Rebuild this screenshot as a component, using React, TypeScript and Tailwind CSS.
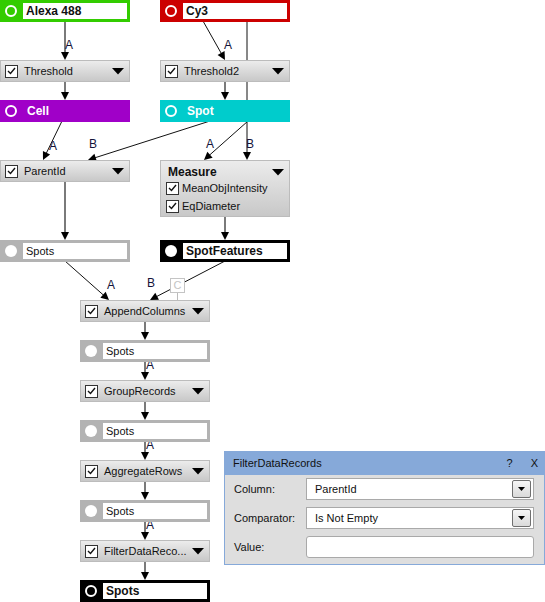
import React from 'react'

type Edge = { x1: number; y1: number; x2: number; y2: number; thick?: boolean }

const edges: Edge[] = [
  { x1: 65, y1: 21, x2: 65, y2: 60, thick: true },
  { x1: 203, y1: 21, x2: 225, y2: 60 },
  { x1: 247, y1: 21, x2: 247, y2: 160 },
  { x1: 65, y1: 82, x2: 65, y2: 100, thick: true },
  { x1: 225, y1: 82, x2: 225, y2: 100, thick: true },
  { x1: 62, y1: 121, x2: 43, y2: 160 },
  { x1: 210, y1: 121, x2: 88, y2: 160 },
  { x1: 248, y1: 121, x2: 204, y2: 160 },
  { x1: 65, y1: 182, x2: 65, y2: 240, thick: true },
  { x1: 225, y1: 217, x2: 225, y2: 240, thick: true },
  { x1: 65, y1: 261, x2: 109, y2: 300 },
  { x1: 225, y1: 261, x2: 150, y2: 300 },
  { x1: 145, y1: 322, x2: 145, y2: 340, thick: true },
  { x1: 145, y1: 361, x2: 145, y2: 380, thick: true },
  { x1: 145, y1: 402, x2: 145, y2: 420, thick: true },
  { x1: 145, y1: 441, x2: 145, y2: 460, thick: true },
  { x1: 145, y1: 482, x2: 145, y2: 500, thick: true },
  { x1: 145, y1: 521, x2: 145, y2: 540, thick: true },
  { x1: 145, y1: 562, x2: 145, y2: 580, thick: true },
]

const labels = [
  { t: 'A', x: 65, y: 39 },
  { t: 'A', x: 224, y: 39 },
  { t: 'A', x: 49, y: 140 },
  { t: 'B', x: 89, y: 138 },
  { t: 'A', x: 206, y: 138 },
  { t: 'B', x: 246, y: 138 },
  { t: 'A', x: 107, y: 279 },
  { t: 'B', x: 147, y: 277 },
  { t: 'A', x: 146, y: 359 },
  { t: 'A', x: 146, y: 439 },
  { t: 'A', x: 146, y: 519 },
]

function Arrow({ e }: { e: Edge }) {
  const dx = e.x2 - e.x1
  const dy = e.y2 - e.y1
  const len = Math.hypot(dx, dy)
  const ux = dx / len
  const uy = dy / len
  const nx = -uy
  const ny = ux
  const bx = e.x2 - ux * 8
  const by = e.y2 - uy * 8
  const pts = `${e.x2},${e.y2} ${bx + nx * 4},${by + ny * 4} ${bx - nx * 4},${by - ny * 4}`
  return (
    <g>
      <line x1={e.x1} y1={e.y1} x2={e.x2 - ux * 6} y2={e.y2 - uy * 6}
        stroke={e.thick ? '#7a7a7a' : '#111'} strokeWidth={e.thick ? 2 : 1} />
      <polygon points={pts} fill="#000" />
    </g>
  )
}

function Check() {
  return (
    <div className="w-[13px] h-[13px] bg-white border border-[#333] flex items-center justify-center shrink-0">
      <svg width="9" height="8" viewBox="0 0 9 8">
        <polyline points="1,4 3.5,6.5 8,1" fill="none" stroke="#111" strokeWidth="1.4" />
      </svg>
    </div>
  )
}

function Tri() {
  return (
    <svg width="12" height="7" viewBox="0 0 12 7" className="shrink-0">
      <polygon points="0,0 12,0 6,6.5" fill="#000" />
    </svg>
  )
}

function Module({ x, y, label }: { x: number; y: number; label: string }) {
  return (
    <div className="absolute w-[130px] h-[22px] border border-[#bcbcbc] bg-gradient-to-b from-[#ececec] to-[#c8c8c8] flex items-center pl-[4px] pr-[5px]"
      style={{ left: x, top: y }}>
      <Check />
      <span className="ml-[6px] flex-1 text-[#111] whitespace-nowrap">{label}</span>
      <Tri />
    </div>
  )
}

type Kind = 'input' | 'object' | 'table' | 'output'

function Data({ x, y, label, kind, color, filled }: { x: number; y: number; label: string; kind: Kind; color?: string; filled?: boolean }) {
  const bg = kind === 'table' ? '#b3b3b3' : kind === 'output' ? '#000' : color
  return (
    <div className="absolute w-[130px] h-[22px] flex items-center" style={{ left: x, top: y, background: bg }}>
      {kind === 'table' || filled ? (
        <div className="ml-[5px] w-[12px] h-[12px] rounded-full bg-white shrink-0" />
      ) : (
        <div className="ml-[5px] w-[12px] h-[12px] rounded-full border-2 border-white shrink-0" />
      )}
      {kind === 'object' ? (
        <span className="ml-[10px] font-bold text-white text-[12px]">{label}</span>
      ) : (
        <div className={`ml-[6px] mr-[3px] flex-1 h-[16px] bg-white pl-[3px] flex items-center text-[#111] ${kind === 'table' ? '' : 'font-bold text-[12px]'}`}>
          {label}
        </div>
      )}
    </div>
  )
}

function Combo({ value }: { value: string }) {
  return (
    <div className="h-[22px] bg-white border border-[#a9a9a9] flex items-center pl-[8px] pr-[2px]">
      <span className="flex-1">{value}</span>
      <div className="w-[19px] h-[18px] border border-[#707070] rounded-[2px] bg-gradient-to-b from-[#f6f6f6] to-[#dadada] flex items-center justify-center">
        <svg width="7" height="4" viewBox="0 0 7 4"><polygon points="0,0 7,0 3.5,4" fill="#000" /></svg>
      </div>
    </div>
  )
}

export default function App() {
  return (
    <div className="relative w-[545px] h-[602px] bg-white overflow-hidden font-['Liberation_Sans',Arial,sans-serif] text-[11px] text-[#111]">
      <svg className="absolute left-0 top-0" width="545" height="602">
        {edges.map((e, i) => <Arrow key={i} e={e} />)}
        <line x1="177.5" y1="293" x2="177.5" y2="300" stroke="#bbb" strokeWidth="1" />
      </svg>

      {labels.map((l, i) => (
        <span key={i} className="absolute text-[12px] leading-none text-[#14143a]" style={{ left: l.x, top: l.y }}>{l.t}</span>
      ))}

      <div className="absolute left-[170px] top-[278px] w-[15px] h-[15px] border border-[#c4c4c4] bg-white text-[#c4c4c4] text-[11px] flex items-center justify-center">C</div>

      <Data x={0} y={0} label="Alexa 488" kind="input" color="#33cc00" />
      <Data x={160} y={0} label="Cy3" kind="input" color="#cc0000" />
      <Module x={0} y={60} label="Threshold" />
      <Module x={160} y={60} label="Threshold2" />
      <Data x={0} y={100} label="Cell" kind="object" color="#a000c8" />
      <Data x={160} y={100} label="Spot" kind="object" color="#00cccc" />
      <Module x={0} y={160} label="ParentId" />

      <div className="absolute left-[160px] top-[160px] w-[130px] h-[57px] border border-[#bcbcbc] bg-gradient-to-b from-[#ececec] to-[#c8c8c8] pl-[5px] pr-[5px] pt-[4px]">
        <div className="flex items-center h-[14px]">
          <span className="flex-1 font-bold text-[12px] ml-[2px]">Measure</span>
          <Tri />
        </div>
        <div className="flex items-center mt-[1px] h-[16px]">
          <Check />
          <span className="ml-[3px] whitespace-nowrap">MeanObjIntensity</span>
        </div>
        <div className="flex items-center mt-[2px] h-[16px]">
          <Check />
          <span className="ml-[3px]">EqDiameter</span>
        </div>
      </div>

      <Data x={0} y={240} label="Spots" kind="table" />
      <Data x={160} y={240} label="SpotFeatures" kind="output" filled />
      <Module x={80} y={300} label="AppendColumns" />
      <Data x={80} y={340} label="Spots" kind="table" />
      <Module x={80} y={380} label="GroupRecords" />
      <Data x={80} y={420} label="Spots" kind="table" />
      <Module x={80} y={460} label="AggregateRows" />
      <Data x={80} y={500} label="Spots" kind="table" />
      <Module x={80} y={540} label="FilterDataReco..." />
      <Data x={80} y={580} label="Spots" kind="output" />

      <div className="absolute left-[224px] top-[451px] w-[321px] h-[114px] border border-[#86a9d9] bg-[#dedede] flex flex-col">
        <div className="h-[23px] bg-[#86a9d9] flex items-center pl-[8px] pr-[6px] text-[#111]">
          <span className="flex-1">FilterDataRecords</span>
          <span className="mr-[18px]">?</span>
          <span>X</span>
        </div>
        <div className="grid grid-cols-[72px_228px] gap-y-[7px] pl-[9px] pt-[3px] items-center">
          <span>Column:</span>
          <Combo value="ParentId" />
          <span>Comparator:</span>
          <Combo value="Is Not Empty" />
          <span>Value:</span>
          <div className="h-[22px] bg-white border border-[#a9a9a9] rounded-[3px]" />
        </div>
      </div>
    </div>
  )
}
